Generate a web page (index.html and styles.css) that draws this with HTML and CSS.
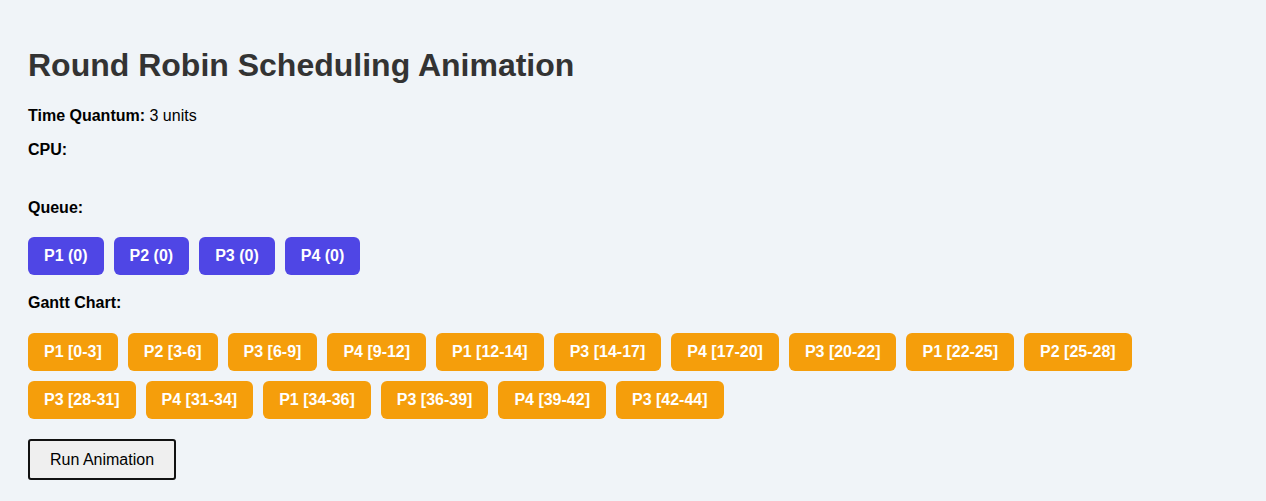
FILE: index.html
```html
<!DOCTYPE html>
<html>
<head>
<meta charset="utf-8">
<link rel="stylesheet" href="styles.css">
</head>
<body>
<div class="page">
  <h1 class="title">Round Robin Scheduling Animation</h1>
  <p class="line"><strong>Time Quantum:</strong> 3 units</p>
  <p class="line label">CPU:</p>
  <div class="cpu"></div>
  <p class="line label">Queue:</p>
  <div class="row queue">
    <div class="proc">P1 (0)</div>
    <div class="proc">P2 (0)</div>
    <div class="proc">P3 (0)</div>
    <div class="proc">P4 (0)</div>
  </div>
  <p class="line label gantt-label">Gantt Chart:</p>
  <div class="row gantt">
    <div class="slot">P1 [0-3]</div>
    <div class="slot">P2 [3-6]</div>
    <div class="slot">P3 [6-9]</div>
    <div class="slot">P4 [9-12]</div>
    <div class="slot">P1 [12-14]</div>
    <div class="slot">P3 [14-17]</div>
    <div class="slot">P4 [17-20]</div>
    <div class="slot">P3 [20-22]</div>
    <div class="slot">P1 [22-25]</div>
    <div class="slot">P2 [25-28]</div>
    <div class="slot">P3 [28-31]</div>
    <div class="slot">P4 [31-34]</div>
    <div class="slot">P1 [34-36]</div>
    <div class="slot">P3 [36-39]</div>
    <div class="slot">P4 [39-42]</div>
    <div class="slot">P3 [42-44]</div>
  </div>
  <button class="run">Run Animation</button>
</div>
</body>
</html>
```

FILE: styles.css
```css
html, body {
  margin: 0;
  padding: 0;
  background: #f0f4f8;
}
body {
  font-family: "Liberation Sans", Arial, sans-serif;
  font-size: 16px;
  color: #000;
}
.page {
  padding: 26px 28px 20px;
}
.title {
  margin: 21px 0 23px;
  font-size: 32px;
  font-weight: bold;
  color: #333;
  line-height: 37px;
}
.line {
  margin: 0;
  line-height: 18px;
}
.line + .line {
  margin-top: 16px;
}
.label {
  font-weight: bold;
}
.cpu {
  height: 40px;
}
.row {
  display: flex;
  flex-wrap: wrap;
  gap: 10px;
}
.queue {
  margin-top: 20px;
}
.gantt-label {
  margin-top: 19px;
}
.gantt {
  margin-top: 21px;
  width: 1120px;
}
.proc, .slot {
  padding: 10px 16px;
  border-radius: 6px;
  color: #fff;
  font-weight: bold;
  line-height: 18px;
}
.proc {
  background: #4f46e5;
}
.slot {
  background: #f59e0b;
}
.run {
  display: block;
  margin-top: 20px;
  padding: 9px 20px;
  font-family: "Liberation Sans", Arial, sans-serif;
  font-size: 16px;
  line-height: 19px;
  color: #000;
  background: #efefef;
  border: 2px solid #111;
  border-radius: 3px;
  height: 41px;
}
```
